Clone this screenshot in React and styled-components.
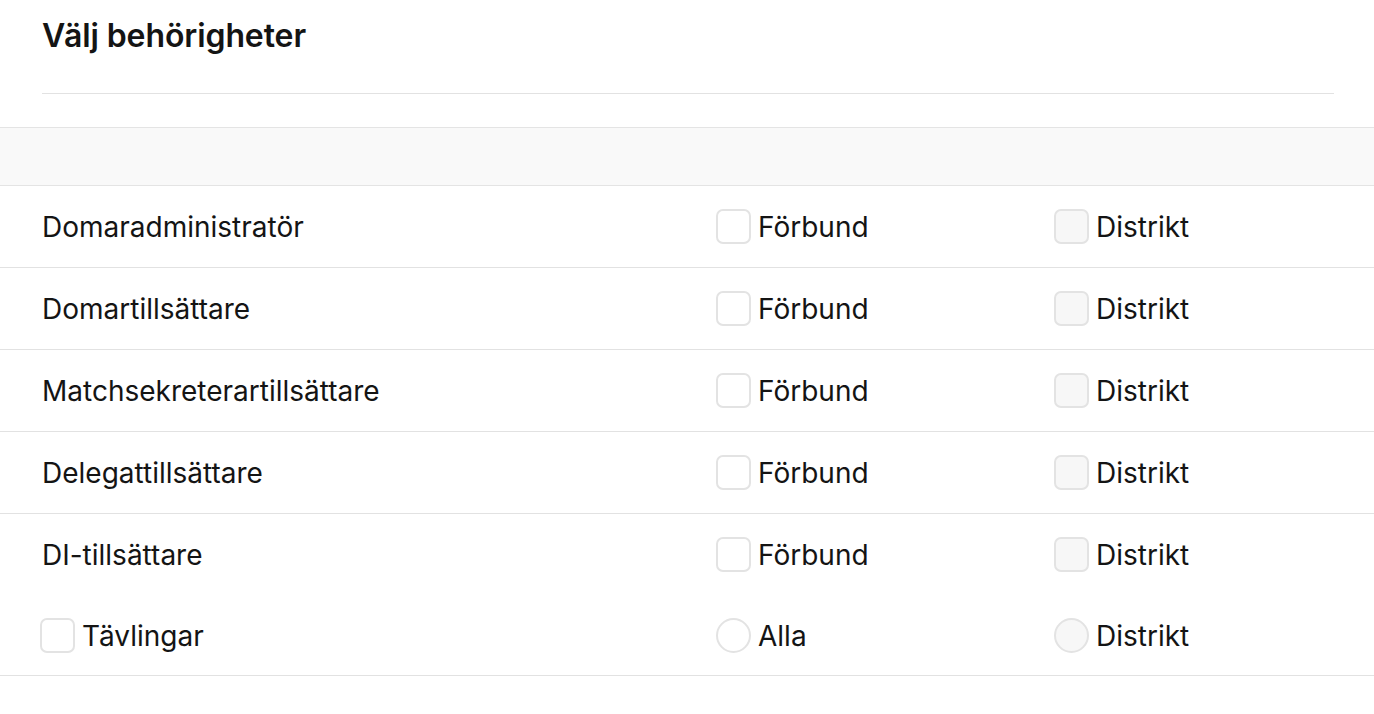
import React from 'react';
import styled, { createGlobalStyle } from 'styled-components';

const GlobalStyle = createGlobalStyle`
  html, body {
    margin: 0;
    padding: 0;
    background: #ffffff;
    font-family: Inter, "Noto Sans", sans-serif;
    color: #141414;
  }
`;

const Page = styled.div`
  width: 1374px;
`;

const Header = styled.div`
  padding: 16px 40px 0 42px;
`;

const Title = styled.h2`
  margin: 0;
  font-size: 32px;
  font-weight: 600;
  line-height: 40px;
  letter-spacing: -0.1px;
`;

const Divider = styled.div`
  height: 1px;
  background: #e2e2e2;
  margin-top: 37px;
`;

const Band = styled.div`
  margin-top: 33px;
  height: 57px;
  background: #f9f9f9;
  border-top: 1px solid #e4e4e4;
  border-bottom: 1px solid #e4e4e4;
`;

const Row = styled.div`
  display: grid;
  grid-template-columns: 674px 338px 1fr;
  align-items: center;
  padding-left: ${(p) => (p.$boxed ? '40px' : '42px')};
  height: ${(p) => p.$h || 81}px;
  border-bottom: 1px solid ${(p) => (p.$line ? '#e2e2e2' : 'transparent')};
  font-size: 28px;
`;

const Cell = styled.label`
  display: flex;
  align-items: center;
  gap: 7px;
  white-space: nowrap;
`;

const OptionCell = styled(Cell)`
  margin-left: ${(p) => (p.$shift ? '2px' : '0')};
`;

const Box = styled.span`
  width: 35px;
  height: 35px;
  flex: none;
  box-sizing: border-box;
  border: 2px solid #e3e3e3;
  border-radius: ${(p) => (p.$round ? '50%' : '7px')};
  background: ${(p) => (p.$disabled ? '#f7f7f7' : '#ffffff')};
`;

const roles = [
  'Domaradministratör',
  'Domartillsättare',
  'Matchsekreterartillsättare',
  'Delegattillsättare',
  'DI-tillsättare',
];

export default function App() {
  return (
    <Page>
      <GlobalStyle />
      <Header>
        <Title>Välj behörigheter</Title>
        <Divider />
      </Header>
      <Band />
      {roles.map((r, i) => (
        <Row key={r} $line={i < roles.length - 1}>
          <Cell>{r}</Cell>
          <OptionCell>
            <Box />
            Förbund
          </OptionCell>
          <OptionCell>
            <Box $disabled />
            Distrikt
          </OptionCell>
        </Row>
      ))}
      <Row $boxed $line $h={79}>
        <Cell>
          <Box />
          Tävlingar
        </Cell>
        <OptionCell $shift>
          <Box $round />
          Alla
        </OptionCell>
        <OptionCell $shift>
          <Box $round $disabled />
          Distrikt
        </OptionCell>
      </Row>
    </Page>
  );
}
